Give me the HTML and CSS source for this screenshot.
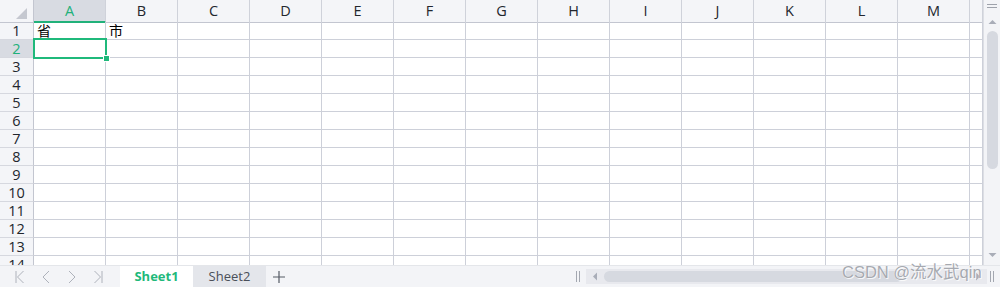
FILE: index.html
```html
<!DOCTYPE html>
<html lang="zh">
<head>
<meta charset="utf-8">
<title>Sheet</title>
<link rel="stylesheet" href="styles.css">
</head>
<body>
<div class="app">
  <div class="main">
    <div class="sheet">
      <div class="row head">
        <div class="corner"><span class="tri"></span></div>
        <div class="ch sel">A</div><div class="ch">B</div><div class="ch">C</div><div class="ch">D</div><div class="ch">E</div><div class="ch">F</div><div class="ch">G</div><div class="ch">H</div><div class="ch">I</div><div class="ch">J</div><div class="ch">K</div><div class="ch">L</div><div class="ch">M</div><div class="ch"></div>
      </div>
      <div class="row"><div class="rh">1</div><div class="c">省</div><div class="c">市</div><div class="c"></div><div class="c"></div><div class="c"></div><div class="c"></div><div class="c"></div><div class="c"></div><div class="c"></div><div class="c"></div><div class="c"></div><div class="c"></div><div class="c"></div><div class="c"></div></div>
      <div class="row"><div class="rh sel">2</div><div class="c"></div><div class="c"></div><div class="c"></div><div class="c"></div><div class="c"></div><div class="c"></div><div class="c"></div><div class="c"></div><div class="c"></div><div class="c"></div><div class="c"></div><div class="c"></div><div class="c"></div><div class="c"></div></div>
      <div class="row"><div class="rh">3</div><div class="c"></div><div class="c"></div><div class="c"></div><div class="c"></div><div class="c"></div><div class="c"></div><div class="c"></div><div class="c"></div><div class="c"></div><div class="c"></div><div class="c"></div><div class="c"></div><div class="c"></div><div class="c"></div></div>
      <div class="row"><div class="rh">4</div><div class="c"></div><div class="c"></div><div class="c"></div><div class="c"></div><div class="c"></div><div class="c"></div><div class="c"></div><div class="c"></div><div class="c"></div><div class="c"></div><div class="c"></div><div class="c"></div><div class="c"></div><div class="c"></div></div>
      <div class="row"><div class="rh">5</div><div class="c"></div><div class="c"></div><div class="c"></div><div class="c"></div><div class="c"></div><div class="c"></div><div class="c"></div><div class="c"></div><div class="c"></div><div class="c"></div><div class="c"></div><div class="c"></div><div class="c"></div><div class="c"></div></div>
      <div class="row"><div class="rh">6</div><div class="c"></div><div class="c"></div><div class="c"></div><div class="c"></div><div class="c"></div><div class="c"></div><div class="c"></div><div class="c"></div><div class="c"></div><div class="c"></div><div class="c"></div><div class="c"></div><div class="c"></div><div class="c"></div></div>
      <div class="row"><div class="rh">7</div><div class="c"></div><div class="c"></div><div class="c"></div><div class="c"></div><div class="c"></div><div class="c"></div><div class="c"></div><div class="c"></div><div class="c"></div><div class="c"></div><div class="c"></div><div class="c"></div><div class="c"></div><div class="c"></div></div>
      <div class="row"><div class="rh">8</div><div class="c"></div><div class="c"></div><div class="c"></div><div class="c"></div><div class="c"></div><div class="c"></div><div class="c"></div><div class="c"></div><div class="c"></div><div class="c"></div><div class="c"></div><div class="c"></div><div class="c"></div><div class="c"></div></div>
      <div class="row"><div class="rh">9</div><div class="c"></div><div class="c"></div><div class="c"></div><div class="c"></div><div class="c"></div><div class="c"></div><div class="c"></div><div class="c"></div><div class="c"></div><div class="c"></div><div class="c"></div><div class="c"></div><div class="c"></div><div class="c"></div></div>
      <div class="row"><div class="rh">10</div><div class="c"></div><div class="c"></div><div class="c"></div><div class="c"></div><div class="c"></div><div class="c"></div><div class="c"></div><div class="c"></div><div class="c"></div><div class="c"></div><div class="c"></div><div class="c"></div><div class="c"></div><div class="c"></div></div>
      <div class="row"><div class="rh">11</div><div class="c"></div><div class="c"></div><div class="c"></div><div class="c"></div><div class="c"></div><div class="c"></div><div class="c"></div><div class="c"></div><div class="c"></div><div class="c"></div><div class="c"></div><div class="c"></div><div class="c"></div><div class="c"></div></div>
      <div class="row"><div class="rh">12</div><div class="c"></div><div class="c"></div><div class="c"></div><div class="c"></div><div class="c"></div><div class="c"></div><div class="c"></div><div class="c"></div><div class="c"></div><div class="c"></div><div class="c"></div><div class="c"></div><div class="c"></div><div class="c"></div></div>
      <div class="row"><div class="rh">13</div><div class="c"></div><div class="c"></div><div class="c"></div><div class="c"></div><div class="c"></div><div class="c"></div><div class="c"></div><div class="c"></div><div class="c"></div><div class="c"></div><div class="c"></div><div class="c"></div><div class="c"></div><div class="c"></div></div>
      <div class="row"><div class="rh">14</div><div class="c"></div><div class="c"></div><div class="c"></div><div class="c"></div><div class="c"></div><div class="c"></div><div class="c"></div><div class="c"></div><div class="c"></div><div class="c"></div><div class="c"></div><div class="c"></div><div class="c"></div><div class="c"></div></div>
      <div class="selection"><span class="handle"></span></div>
    </div>
    <div class="vscroll">
      <span class="grip"></span>
      <svg class="arr" width="9" height="6" viewBox="0 0 9 6"><path d="M0.5 5 L4.5 1 L8.5 5 Z" fill="#a9adb8"/></svg>
      <div class="vtrack"><div class="vthumb"></div></div>
      <svg class="arr" width="9" height="6" viewBox="0 0 9 6"><path d="M0.5 1 L4.5 5 L8.5 1 Z" fill="#a9adb8"/></svg>
    </div>
  </div>
  <div class="bottombar">
    <div class="nav">
      <svg width="14" height="16" viewBox="0 0 14 16"><path d="M3 2 V14 M10.5 2 L4.5 8 L10.5 14" stroke="#aeb2bb" stroke-width="1" fill="none"/></svg>
      <svg width="14" height="16" viewBox="0 0 14 16"><path d="M10 2 L4 8 L10 14" stroke="#aeb2bb" stroke-width="1" fill="none"/></svg>
      <svg width="14" height="16" viewBox="0 0 14 16"><path d="M4 2 L10 8 L4 14" stroke="#aeb2bb" stroke-width="1" fill="none"/></svg>
      <svg width="14" height="16" viewBox="0 0 14 16"><path d="M3.5 2 L9.5 8 L3.5 14 M11 2 V14" stroke="#aeb2bb" stroke-width="1" fill="none"/></svg>
    </div>
    <div class="tabs">
      <div class="tab active">Sheet1</div>
      <div class="tab">Sheet2</div>
      <svg class="plus" width="14" height="14" viewBox="0 0 14 14"><path d="M7 1 V13 M1 7 H13" stroke="#555a64" stroke-width="1.2" fill="none"/></svg>
    </div>
    <div class="hscroll">
      <span class="split"></span>
      <div class="htrack">
        <svg width="6" height="9" viewBox="0 0 6 9"><path d="M5 0.5 L1 4.5 L5 8.5 Z" fill="#a9adb8"/></svg>
        <div class="hthumb"></div>
        <svg width="6" height="9" viewBox="0 0 6 9"><path d="M1 0.5 L5 4.5 L1 8.5 Z" fill="#a9adb8"/></svg>
      </div>
      <span class="split"></span>
    </div>
  </div>
  <div class="watermark">CSDN @流水武qin</div>
</div>
</body>
</html>
```

FILE: styles.css
```css
* { box-sizing: border-box; }
html, body { margin: 0; padding: 0; }
body {
  width: 1000px;
  height: 287px;
  overflow: hidden;
  background: #ffffff;
  font-family: "Open Sans", "Noto Sans", "Noto Sans CJK SC", sans-serif;
}
.app {
  position: relative;
  width: 1000px;
  height: 287px;
  display: flex;
  flex-direction: column;
}
.main {
  height: 265px;
  display: flex;
  overflow: hidden;
}
.sheet {
  position: relative;
  width: 983px;
  flex: none;
}
.row {
  display: grid;
  grid-template-columns: 34px repeat(13, 72px) 1fr;
  height: 18px;
}
.row.head { height: 22px; }
.corner, .ch, .rh {
  background: #f4f5f8;
  color: #22262d;
}
.corner {
  position: relative;
  border-right: 1px solid #c3c6d0;
  border-bottom: 1px solid #c3c6d0;
}
.tri {
  position: absolute;
  right: 6px;
  bottom: 3px;
  width: 0;
  height: 0;
  border-left: 11px solid transparent;
  border-bottom: 11px solid #c5c8d0;
}
.ch {
  border-right: 1px solid #cfd2da;
  border-bottom: 1px solid #c3c6d0;
  font-size: 14.5px;
  line-height: 21px;
  text-align: center;
}
.ch.sel {
  background: #d8dbe2;
  color: #21b17a;
  border-bottom: 2px solid #21b17a;
}
.rh {
  border-right: 1px solid #c3c6d0;
  border-bottom: 1px solid #d6d8df;
  font-size: 14.5px;
  line-height: 17px;
  text-align: center;
}
.rh.sel {
  background: #d8dbe2;
  color: #21b17a;
}
.c {
  border-right: 1px solid #cdd0d9;
  border-bottom: 1px solid #cdd0d9;
  font-family: "Noto Sans CJK SC", sans-serif;
  font-size: 14px;
  line-height: 16px;
  padding-left: 3px;
  color: #000;
}
.selection {
  position: absolute;
  left: 33px;
  top: 38px;
  width: 74px;
  height: 21px;
  border: 2.5px solid #1fb97b;
}
.handle {
  position: absolute;
  right: -5px;
  bottom: -5px;
  width: 7px;
  height: 7px;
  background: #1fb97b;
  border: 1px solid #ffffff;
}
.vscroll {
  flex: 1;
  background: #f3f4f7;
  border-left: 1px solid #dcdee4;
  display: flex;
  flex-direction: column;
  align-items: center;
  padding: 4px 0 7px;
}
.grip {
  width: 10px;
  height: 4px;
  border-top: 1px solid #9ea2ab;
  border-bottom: 1px solid #9ea2ab;
}
.vscroll .arr { margin-top: 11px; }
.vtrack {
  flex: 1;
  width: 100%;
  padding: 6px 2px 0;
}
.vthumb {
  width: 11px;
  height: 138px;
  margin: 0 auto;
  border-radius: 6px;
  background: #d6d9e0;
}
.bottombar {
  height: 22px;
  background: #f3f4f7;
  border-top: 1px solid #e4e6ea;
  display: flex;
  align-items: stretch;
}
.nav {
  width: 120px;
  display: flex;
  align-items: center;
  gap: 12px;
  padding-left: 13px;
}
.tabs {
  display: flex;
  align-items: center;
}
.tab {
  width: 73px;
  height: 21px;
  line-height: 20px;
  text-align: center;
  font-size: 13px;
  color: #4a4f59;
  background: #e4e6eb;
  font-family: "Open Sans", "Noto Sans", sans-serif;
}
.tab.active {
  background: #ffffff;
  color: #1fb97b;
  font-weight: 700;
}
.plus { margin-left: 6px; }
.hscroll {
  margin-left: auto;
  width: 427px;
  display: flex;
  align-items: center;
}
.split {
  width: 4px;
  height: 11px;
  border-left: 1px solid #a3a7b0;
  border-right: 1px solid #a3a7b0;
  margin: 0 6px 0 3px;
}
.htrack {
  flex: 1;
  height: 15px;
  background: #e8e9ee;
  display: flex;
  align-items: center;
  padding: 0 6px;
  gap: 6px;
}
.hthumb {
  width: 298px;
  height: 11px;
  border-radius: 6px;
  background: #d6d9e0;
  margin-right: auto;
}
.watermark {
  position: absolute;
  left: 842px;
  top: 259px;
  font-family: "Liberation Sans", "Noto Sans CJK SC", sans-serif;
  font-size: 16.5px;
  color: #a6a9b0;
  text-shadow: 0 0 1px #ffffff, 1px 1px 0 rgba(255,255,255,0.8);
  white-space: nowrap;
}
```
